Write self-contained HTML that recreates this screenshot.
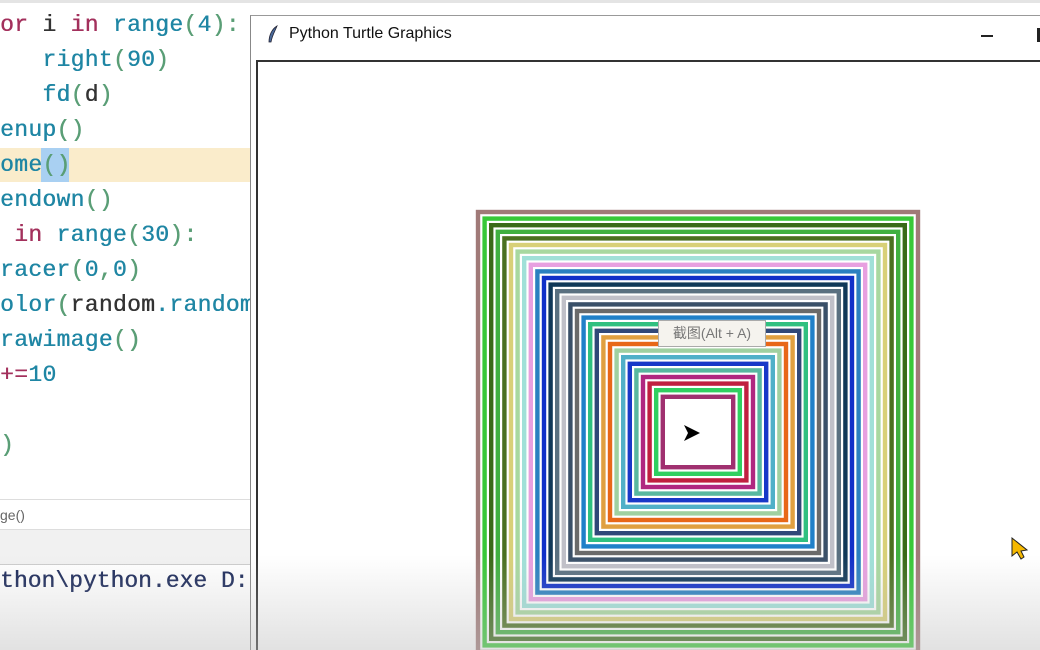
<!DOCTYPE html>
<html><head><meta charset="utf-8"><style>
html,body{margin:0;padding:0;width:1040px;height:650px;overflow:hidden;background:#fff;position:relative;font-family:"Liberation Sans",sans-serif}
.code{position:absolute;left:0;top:8px;width:250px;font-family:"Liberation Mono","DejaVu Sans Mono",monospace;font-size:23px;letter-spacing:0.3px;text-shadow:0.4px 0 0 currentColor}
.l{position:absolute;left:0;height:35px;line-height:35px;white-space:pre}
.k{color:#a3305c}.f{color:#1f86a4}.p{color:#5a9e76}.n{color:#1f86a4}.t{color:#333}
</style></head><body>
<div style="position:absolute;left:0;top:0;width:1040px;height:3px;background:#e4e4e4"></div>
<div style="position:absolute;left:0;top:148px;width:250px;height:34px;background:#faeccb"></div>
<div style="position:absolute;left:41px;top:148px;width:28px;height:34px;background:#a9d0f2"></div>
<div class="code">
<div class="l" style="top:0"><span class="k">or</span> <span class="t">i</span> <span class="k">in</span> <span class="f">range</span><span class="p">(</span><span class="n">4</span><span class="p">):</span></div>
<div class="l" style="top:35px">   <span class="f">right</span><span class="p">(</span><span class="n">90</span><span class="p">)</span></div>
<div class="l" style="top:70px">   <span class="f">fd</span><span class="p">(</span><span class="t">d</span><span class="p">)</span></div>
<div class="l" style="top:105px"><span class="f">enup</span><span class="p">()</span></div>
<div class="l" style="top:140px"><span class="f">ome</span><span class="p">()</span></div>
<div class="l" style="top:175px"><span class="f">endown</span><span class="p">()</span></div>
<div class="l" style="top:210px"> <span class="k">in</span> <span class="f">range</span><span class="p">(</span><span class="n">30</span><span class="p">):</span></div>
<div class="l" style="top:245px"><span class="f">racer</span><span class="p">(</span><span class="n">0</span><span class="p">,</span><span class="n">0</span><span class="p">)</span></div>
<div class="l" style="top:280px"><span class="f">olor</span><span class="p">(</span><span class="t">random</span><span class="f">.random</span></div>
<div class="l" style="top:315px"><span class="f">rawimage</span><span class="p">()</span></div>
<div class="l" style="top:350px"><span class="k">+=</span><span class="n">10</span></div>
<div class="l" style="top:420px"><span class="p">)</span></div>
</div>
<div style="position:absolute;left:0;top:499px;width:250px;height:1px;background:#ddd"></div>
<div style="position:absolute;left:0;top:507px;font-size:14px;color:#666">ge()</div>
<div style="position:absolute;left:0;top:529px;width:250px;height:34px;background:#f1f1f1;border-top:1px solid #ddd;border-bottom:1px solid #ccc"></div>
<div style="position:absolute;left:0;top:568px;font-family:'Liberation Mono',monospace;font-size:23px;color:#1c2a5a;white-space:pre;text-shadow:0.4px 0 0 #1c2a5a">thon\python.exe D:</div>
<div style="position:absolute;left:250px;top:15px;width:790px;height:640px;background:#fff;border-left:1px solid #888;border-top:1px solid #999"></div>
<svg style="position:absolute;left:266px;top:25px" width="14" height="20" viewBox="0 0 14 20"><path d="M11 1 C6 4 3 10 3 17 L5 17 C6 11 9 6 11 1Z" fill="#4a6a9a" stroke="#223" stroke-width="0.8"/></svg>
<div style="position:absolute;left:289px;top:25px;font-size:16px;color:#111">Python Turtle Graphics</div>
<div style="position:absolute;left:981px;top:35px;width:12px;height:1.5px;background:#222"></div>
<div style="position:absolute;left:1037px;top:28px;width:3px;height:14px;background:#222"></div>
<div style="position:absolute;left:256px;top:60px;width:784px;height:600px;border-left:2px solid #333;border-top:2px solid #333;background:#fff"></div>
<svg style="position:absolute;left:0;top:0" width="1040" height="650">
<g transform="translate(698,432)" fill="none" stroke-width="4.4">
<rect x="-220" y="-220" width="440" height="440" stroke="#a07a78"/>
<rect x="-213.4" y="-213.4" width="426.8" height="426.8" stroke="#38c838"/>
<rect x="-206.8" y="-206.8" width="413.6" height="413.6" stroke="#3a6a18"/>
<rect x="-200.2" y="-200.2" width="400.4" height="400.4" stroke="#40b040"/>
<rect x="-193.6" y="-193.6" width="387.2" height="387.2" stroke="#4a7020"/>
<rect x="-187" y="-187" width="374" height="374" stroke="#d8d078"/>
<rect x="-180.4" y="-180.4" width="360.8" height="360.8" stroke="#a8d8a0"/>
<rect x="-173.8" y="-173.8" width="347.6" height="347.6" stroke="#a0e0d8"/>
<rect x="-167.2" y="-167.2" width="334.4" height="334.4" stroke="#e8a0e0"/>
<rect x="-160.6" y="-160.6" width="321.2" height="321.2" stroke="#2a80c0"/>
<rect x="-154" y="-154" width="308" height="308" stroke="#1030c8"/>
<rect x="-147.4" y="-147.4" width="294.8" height="294.8" stroke="#103858"/>
<rect x="-140.8" y="-140.8" width="281.6" height="281.6" stroke="#5a7080"/>
<rect x="-134.2" y="-134.2" width="268.4" height="268.4" stroke="#c0c0c8"/>
<rect x="-127.6" y="-127.6" width="255.2" height="255.2" stroke="#3a5068"/>
<rect x="-121" y="-121" width="242" height="242" stroke="#6a6a6a"/>
<rect x="-114.4" y="-114.4" width="228.8" height="228.8" stroke="#2080c8"/>
<rect x="-107.8" y="-107.8" width="215.6" height="215.6" stroke="#30c080"/>
<rect x="-101.2" y="-101.2" width="202.4" height="202.4" stroke="#304878"/>
<rect x="-94.6" y="-94.6" width="189.2" height="189.2" stroke="#e0a040"/>
<rect x="-88" y="-88" width="176" height="176" stroke="#e86818"/>
<rect x="-81.4" y="-81.4" width="162.8" height="162.8" stroke="#a0d0a0"/>
<rect x="-74.8" y="-74.8" width="149.6" height="149.6" stroke="#50b0c8"/>
<rect x="-68.2" y="-68.2" width="136.4" height="136.4" stroke="#1838c8"/>
<rect x="-61.6" y="-61.6" width="123.2" height="123.2" stroke="#58b8a0"/>
<rect x="-55" y="-55" width="110" height="110" stroke="#b02880"/>
<rect x="-48.4" y="-48.4" width="96.8" height="96.8" stroke="#c02040"/>
<rect x="-41.8" y="-41.8" width="83.6" height="83.6" stroke="#30d060"/>
<rect x="-35.2" y="-35.2" width="70.4" height="70.4" stroke="#a03070"/>
</g>
<path d="M684 425 L700 433 L684 441 L688 433 Z" fill="#000"/>
<path d="M1012 538 L1012 556 L1017 552 L1021 559 L1024 557 L1021 551 L1027 550 Z" fill="#f5b800" stroke="#222" stroke-width="1"/>
</svg>
<div style="position:absolute;left:658px;top:320px;width:106px;height:25px;background:#f5f3ee;border:1px solid #aaa;font-family:'Liberation Sans','Noto Sans CJK SC',sans-serif;font-size:14px;color:#777;line-height:25px;text-align:center">截图(Alt + A)</div>
<div style="position:absolute;left:0;top:555px;width:1040px;height:95px;background:linear-gradient(to bottom,rgba(190,190,190,0),rgba(190,190,190,0.45))"></div>
</body></html>
